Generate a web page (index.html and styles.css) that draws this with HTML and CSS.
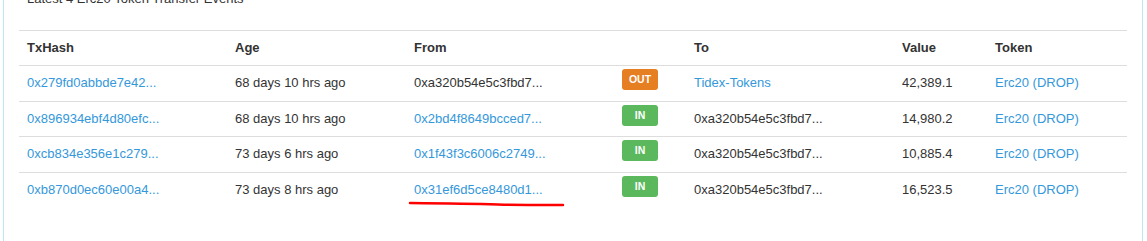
FILE: index.html
```html
<!DOCTYPE html>
<html lang="en">
<head>
<meta charset="utf-8">
<title>Erc20 Token Transfer Events</title>
<link rel="stylesheet" href="styles.css">
</head>
<body>
<div class="panel">
  <div class="panel-body">
    <div class="caption">Latest 4 Erc20 Token Transfer Events</div>
    <table class="transfers">
      <colgroup>
        <col class="c-hash"><col class="c-age"><col class="c-from"><col class="c-dir"><col class="c-to"><col class="c-value"><col class="c-token">
      </colgroup>
      <thead>
        <tr><th>TxHash</th><th>Age</th><th>From</th><th></th><th>To</th><th>Value</th><th>Token</th></tr>
      </thead>
      <tbody>
        <tr>
          <td><a href="#">0x279fd0abbde7e42...</a></td>
          <td>68 days 10 hrs ago</td>
          <td>0xa320b54e5c3fbd7...</td>
          <td class="dir"><span class="badge out">OUT</span></td>
          <td><a href="#">Tidex-Tokens</a></td>
          <td>42,389.1</td>
          <td><a href="#">Erc20 (DROP)</a></td>
        </tr>
        <tr>
          <td><a href="#">0x896934ebf4d80efc...</a></td>
          <td>68 days 10 hrs ago</td>
          <td><a href="#">0x2bd4f8649bcced7...</a></td>
          <td class="dir"><span class="badge in">IN</span></td>
          <td>0xa320b54e5c3fbd7...</td>
          <td>14,980.2</td>
          <td><a href="#">Erc20 (DROP)</a></td>
        </tr>
        <tr>
          <td><a href="#">0xcb834e356e1c279...</a></td>
          <td>73 days 6 hrs ago</td>
          <td><a href="#">0x1f43f3c6006c2749...</a></td>
          <td class="dir"><span class="badge in">IN</span></td>
          <td>0xa320b54e5c3fbd7...</td>
          <td>10,885.4</td>
          <td><a href="#">Erc20 (DROP)</a></td>
        </tr>
        <tr>
          <td><a href="#">0xb870d0ec60e00a4...</a></td>
          <td>73 days 8 hrs ago</td>
          <td><span class="marked"><a href="#">0x31ef6d5ce8480d1...</a><svg class="scribble" width="160" height="8" viewBox="0 0 160 8"><path d="M2 3 Q 60 3.6 90 4.4 T 155 5" fill="none" stroke="#f00" stroke-width="2.5" stroke-linecap="round"/></svg></span></td>
          <td class="dir"><span class="badge in">IN</span></td>
          <td>0xa320b54e5c3fbd7...</td>
          <td>16,523.5</td>
          <td><a href="#">Erc20 (DROP)</a></td>
        </tr>
      </tbody>
    </table>
  </div>
</div>
</body>
</html>
```

FILE: styles.css
```css
html, body {
  margin: 0;
  padding: 0;
  background: #fff;
}

body {
  font-family: "Liberation Sans", Arial, sans-serif;
  font-size: 13px;
  line-height: 1.42857;
  color: #333;
  overflow: hidden;
}

a {
  color: #3498db;
  text-decoration: none;
}

.panel {
  margin-left: 3px;
  width: 1138px;
  border-left: 1px solid #bce8f1;
  border-right: 1px solid #bce8f1;
}

.panel-body {
  padding: 0 15px 80px;
}

.caption {
  margin-top: -10px;
  margin-bottom: 21px;
  padding-left: 8px;
}

.transfers {
  width: 1108px;
  border-collapse: collapse;
  table-layout: fixed;
}

.c-hash { width: 208px; }
.c-age { width: 179px; }
.c-from { width: 208px; }
.c-dir { width: 72px; }
.c-to { width: 208px; }
.c-value { width: 93px; }
.c-token { width: 140px; }

.transfers th,
.transfers td {
  padding: 8px;
  text-align: left;
  vertical-align: top;
  white-space: nowrap;
  border-top: 1px solid #ddd;
}

.transfers th {
  font-weight: bold;
  border-bottom: 1px solid #ddd;
}

.transfers td.dir {
  padding: 3px 8px 0;
}

.badge {
  display: block;
  width: 36px;
  height: 21px;
  line-height: 21px;
  border-radius: 3px;
  color: #fff;
  font-size: 10.5px;
  font-weight: bold;
  text-align: center;
}

.badge.out { background: #e67e22; }
.badge.in { background: #5cb85c; }

.marked {
  position: relative;
  display: inline-block;
}

.scribble {
  position: absolute;
  left: -6px;
  top: 19px;
}
```
